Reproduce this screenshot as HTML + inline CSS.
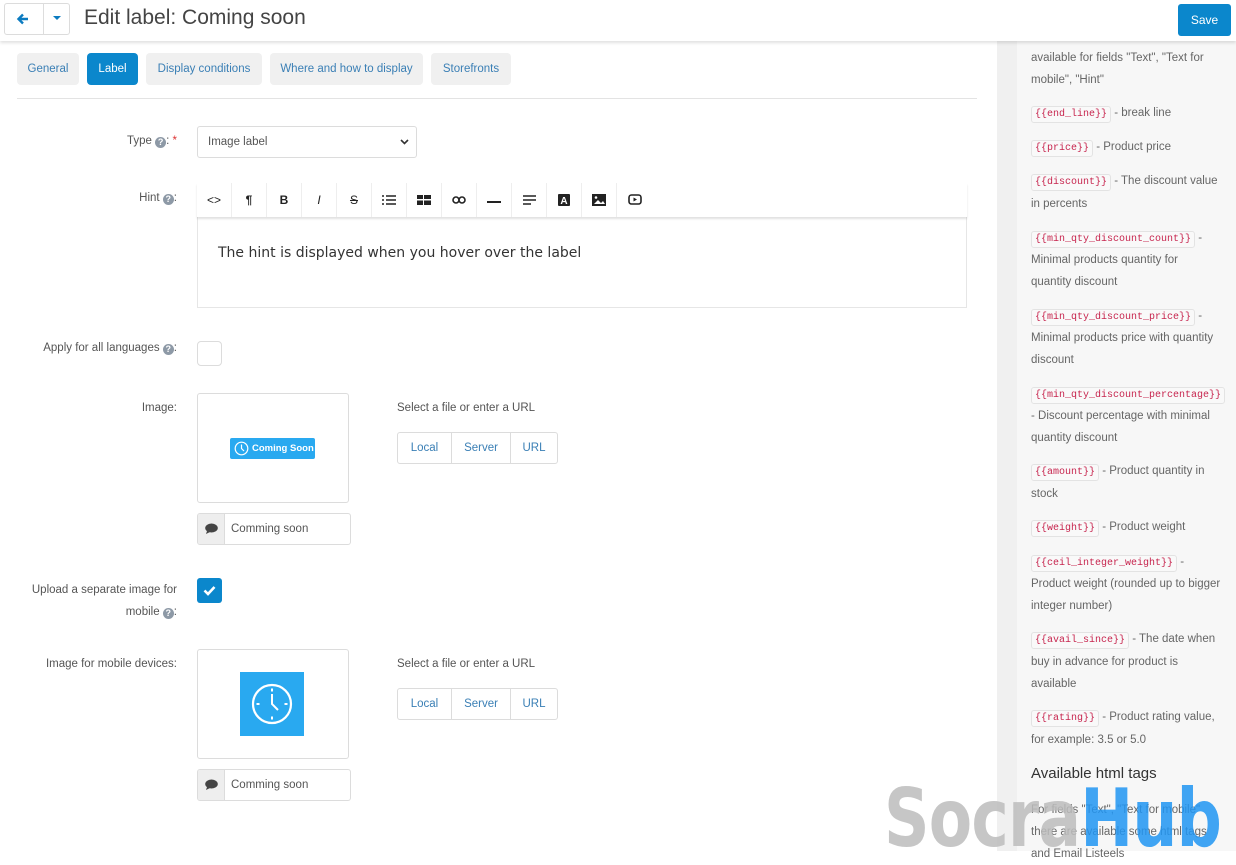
<!DOCTYPE html>
<html><head><meta charset="utf-8"><style>
*{box-sizing:border-box;margin:0;padding:0}
body{width:1236px;height:851px;overflow:hidden;background:#fff;font-family:"Liberation Sans",sans-serif;font-size:11.5px;color:#555;position:relative}
.a{position:absolute}
.hdr{left:0;top:0;width:1236px;height:41px;background:#fff;box-shadow:0 2px 3px rgba(0,0,0,.12);z-index:5}
.tab{position:absolute;top:53px;height:32px;border-radius:4px;background:#f0f0f0;color:#3a7fb5;font-size:11.5px;line-height:32px;text-align:center}
.lbl{position:absolute;right:1059px;text-align:right;font-size:11.5px;color:#555;white-space:nowrap}
.q{display:inline-block;width:11px;height:11px;border-radius:50%;background:#8d99a6;color:#fff;font-size:9px;line-height:11px;text-align:center;font-weight:bold;vertical-align:-1px}
.box{border:1px solid #dcdcdc;border-radius:3px;background:#fff}
.tb{position:absolute;top:183px;width:35px;height:34px;border-right:1px solid #eee;text-align:center;line-height:34px;font-size:12px;color:#222;font-weight:bold}
.btns{position:absolute;height:32px;width:161px;border:1px solid #dcdcdc;border-radius:3px;display:flex;color:#3a7fb5;font-size:11.5px}
.btns div{line-height:30px;text-align:center;border-right:1px solid #dcdcdc}
.btns div:last-child{border-right:0}
.side{left:997px;top:41px;width:20px;height:810px;background:#f0f0f0}
.pan{left:1017px;top:41px;width:219px;height:810px;background:#f7f7f7}
.s{position:absolute;left:1031px;font-size:11.5px;color:#666;white-space:nowrap;line-height:16px}
code{font-family:"Liberation Mono",monospace;font-size:10px;color:#c7254e;background:#f9f9f9;border:1px solid #e3e3e3;border-radius:3px;padding:2px 3px}
</style></head><body>
<div class="a hdr">
 <div class="a box" style="left:4px;top:3px;width:66px;height:32px;border-radius:3px"></div>
 <div class="a" style="left:43px;top:3px;width:1px;height:32px;background:#ddd"></div>
 <svg class="a" style="left:16px;top:12px" width="14" height="14" viewBox="0 0 14 14"><path d="M12 7H3M7 2.5L2.5 7 7 11.5" stroke="#0b7bc0" stroke-width="2.4" fill="none"/></svg>
 <svg class="a" style="left:53px;top:16px" width="8" height="5"><path d="M0 0h8L4 4z" fill="#0b7bc0"/></svg>
 <div class="a" style="left:84px;top:6px;font-size:21px;color:#444">Edit label: Coming soon</div>
 <div class="a" style="left:1178px;top:4px;width:53px;height:32px;background:#0b87cc;border-radius:3px;color:#fff;font-size:12px;line-height:32px;text-align:center">Save</div>
</div>
<div class="tab" style="left:17px;width:62px">General</div>
<div class="tab" style="left:87px;width:51px;background:#0b87cc;color:#fff">Label</div>
<div class="tab" style="left:146px;width:116px">Display conditions</div>
<div class="tab" style="left:270px;width:153px">Where and how to display</div>
<div class="tab" style="left:431px;width:80px">Storefronts</div>
<div class="a" style="left:17px;top:98px;width:960px;height:1px;background:#e3e3e3"></div>

<div class="lbl" style="top:135px">Type <span class="q">?</span>: <span style="color:#d33">*</span></div>
<div class="a box" style="left:197px;top:126px;width:220px;height:32px;padding:9px 10px;color:#555">Image label
 <svg class="a" style="right:7px;top:12px" width="9" height="6"><path d="M1 1l3.5 3.5L8 1" stroke="#333" stroke-width="1.6" fill="none"/></svg></div>

<div class="lbl" style="top:192px">Hint <span class="q">?</span>:</div>
<div class="a" style="left:197px;top:183px;width:770px;height:125px;border:1px solid #e6e6e6"></div>
<div class="a" style="left:197px;top:183px;width:770px;height:34px;background:#fff;box-shadow:0 2px 2px rgba(0,0,0,.12)"></div>
<div class="tb" style="left:197px;font-weight:normal">&lt;&gt;</div>
<div class="tb" style="left:232px">¶</div>
<div class="tb" style="left:267px">B</div>
<div class="tb" style="left:302px;font-style:italic;font-weight:normal">I</div>
<div class="tb" style="left:337px;text-decoration:line-through;font-weight:normal">S</div>
<div class="tb" style="left:372px"><svg width="14" height="10" style="vertical-align:-1px"><path d="M0 1h2M4 1h10M0 5h2M4 5h10M0 9h2M4 9h10" stroke="#222" stroke-width="1.6"/></svg></div>
<div class="tb" style="left:407px"><svg width="14" height="10" style="vertical-align:-1px"><path d="M0 0h6v4H0zM7 0h7v4H7zM0 5.5h6V10H0zM7 5.5h7V10H7z" fill="#222"/></svg></div>
<div class="tb" style="left:442px"><svg width="14" height="8" style="vertical-align:0"><rect x="1" y="1" width="6" height="6" rx="3" stroke="#222" stroke-width="1.6" fill="none"/><rect x="7" y="1" width="6" height="6" rx="3" stroke="#222" stroke-width="1.6" fill="none"/></svg></div>
<div class="tb" style="left:477px"><svg width="14" height="4"><path d="M0 2h14" stroke="#222" stroke-width="2"/></svg></div>
<div class="tb" style="left:512px"><svg width="13" height="10" style="vertical-align:-1px"><path d="M0 1h13M0 5h13M0 9h8" stroke="#222" stroke-width="1.6"/></svg></div>
<div class="tb" style="left:547px"><svg width="12" height="12" style="vertical-align:-2px"><rect width="12" height="12" rx="1" fill="#222"/><text x="6" y="10" font-size="10" font-family="Liberation Sans" font-weight="bold" fill="#fff" text-anchor="middle">A</text></svg></div>
<div class="tb" style="left:582px"><svg width="14" height="12" style="vertical-align:-2px"><rect width="14" height="12" fill="#222"/><path d="M2 10l4-4 3 3 2-2 2 3z" fill="#fff"/><circle cx="4" cy="3.5" r="1.3" fill="#fff"/></svg></div>
<div class="tb" style="left:617px;border-right:0"><svg width="14" height="11" style="vertical-align:-1px"><rect x="1" y="1" width="12" height="9" rx="2.5" stroke="#222" stroke-width="1.6" fill="none"/><path d="M5.5 3.5v4l3.5-2z" fill="#222"/></svg></div>
<div class="a" style="left:218px;top:245px;font-family:'DejaVu Sans',sans-serif;font-size:14px;color:#333">The hint is displayed when you hover over the label</div>

<div class="lbl" style="top:342px">Apply for all languages <span class="q">?</span>:</div>
<div class="a box" style="left:197px;top:341px;width:25px;height:25px;border-radius:4px"></div>

<div class="lbl" style="top:402px">Image:</div>
<div class="a box" style="left:197px;top:393px;width:152px;height:110px"></div>
<div class="a" style="left:230px;top:438px;width:85px;height:21px;background:#29a9f0;border-radius:2px;color:#fff;font-size:9.5px;font-weight:bold;line-height:21px;padding-left:22px">Coming Soon
 <svg class="a" style="left:4px;top:3px" width="15" height="15"><circle cx="7.5" cy="7.5" r="6.3" stroke="#fff" stroke-width="1.2" fill="none"/><path d="M7.5 3.5v4l2.5 2.5" stroke="#fff" stroke-width="1.2" fill="none"/></svg></div>
<div class="a box" style="left:197px;top:513px;width:154px;height:32px;overflow:hidden">
 <div class="a" style="left:0;top:0;width:27px;height:30px;background:#eee;border-right:1px solid #dcdcdc"></div>
 <svg class="a" style="left:7px;top:9px" width="13" height="12"><ellipse cx="6.5" cy="5" rx="6.3" ry="4.5" fill="#444"/><path d="M2 8l-1 3 4-2z" fill="#444"/></svg>
 <div class="a" style="left:33px;top:9px;color:#555">Comming soon</div></div>
<div class="a" style="left:397px;top:402px;color:#555">Select a file or enter a URL</div>
<div class="btns" style="left:397px;top:432px"><div style="width:54px">Local</div><div style="width:59px">Server</div><div style="width:46px">URL</div></div>

<div class="lbl" style="top:579px;line-height:22px">Upload a separate image for<br>mobile <span class="q">?</span>:</div>
<div class="a" style="left:197px;top:578px;width:25px;height:25px;border-radius:3px;background:#0b87cc">
 <svg class="a" style="left:6px;top:7px" width="13" height="11"><path d="M1.5 5.5l3.5 3.5 6.5-7" stroke="#fff" stroke-width="2.6" fill="none"/></svg></div>

<div class="lbl" style="top:658px">Image for mobile devices:</div>
<div class="a box" style="left:197px;top:649px;width:152px;height:110px"></div>
<div class="a" style="left:240px;top:672px;width:64px;height:64px;background:#29a9f0"></div>
<svg class="a" style="left:240px;top:672px" width="64" height="64"><circle cx="32" cy="32" r="19" stroke="#fff" stroke-width="2.2" fill="none"/><path d="M32 16.5v3M32 44.5v3M16.5 32h3M44.5 32h3M32 22v10l6 6" stroke="#fff" stroke-width="2" fill="none"/></svg>
<div class="a box" style="left:197px;top:769px;width:154px;height:32px;overflow:hidden">
 <div class="a" style="left:0;top:0;width:27px;height:30px;background:#eee;border-right:1px solid #dcdcdc"></div>
 <svg class="a" style="left:7px;top:9px" width="13" height="12"><ellipse cx="6.5" cy="5" rx="6.3" ry="4.5" fill="#444"/><path d="M2 8l-1 3 4-2z" fill="#444"/></svg>
 <div class="a" style="left:33px;top:9px;color:#555">Comming soon</div></div>
<div class="a" style="left:397px;top:658px;color:#555">Select a file or enter a URL</div>
<div class="btns" style="left:397px;top:688px"><div style="width:54px">Local</div><div style="width:59px">Server</div><div style="width:46px">URL</div></div>

<div class="a side"></div><div class="a pan"></div>
<div class="s" style="top:50px">available for fields "Text", "Text for</div>
<div class="s" style="top:72px">mobile", "Hint"</div>
<div class="s" style="top:105px"><code>{{end_line}}</code> - break line</div>
<div class="s" style="top:139px"><code>{{price}}</code> - Product price</div>
<div class="s" style="top:173px"><code>{{discount}}</code> - The discount value</div>
<div class="s" style="top:196px">in percents</div>
<div class="s" style="top:230px"><code>{{min_qty_discount_count}}</code> -</div>
<div class="s" style="top:252px">Minimal products quantity for</div>
<div class="s" style="top:274px">quantity discount</div>
<div class="s" style="top:308px"><code>{{min_qty_discount_price}}</code> -</div>
<div class="s" style="top:330px">Minimal products price with quantity</div>
<div class="s" style="top:352px">discount</div>
<div class="s" style="top:386px"><code>{{min_qty_discount_percentage}}</code></div>
<div class="s" style="top:408px">- Discount percentage with minimal</div>
<div class="s" style="top:430px">quantity discount</div>
<div class="s" style="top:463px"><code>{{amount}}</code> - Product quantity in</div>
<div class="s" style="top:486px">stock</div>
<div class="s" style="top:519px"><code>{{weight}}</code> - Product weight</div>
<div class="s" style="top:554px"><code>{{ceil_integer_weight}}</code> -</div>
<div class="s" style="top:576px">Product weight (rounded up to bigger</div>
<div class="s" style="top:598px">integer number)</div>
<div class="s" style="top:631px"><code>{{avail_since}}</code> - The date when</div>
<div class="s" style="top:654px">buy in advance for product is</div>
<div class="s" style="top:676px">available</div>
<div class="s" style="top:709px"><code>{{rating}}</code> - Product rating value,</div>
<div class="s" style="top:732px">for example: 3.5 or 5.0</div>
<div class="s" style="top:764px;font-size:15px;color:#333;line-height:20px">Available html tags</div>
<div class="s" style="top:802px">For fields "Text", "Text for mobile"</div>
<div class="s" style="top:824px">there are available some html tags</div>
<div class="s" style="top:846px">and Email Listeels</div>
<div class="a" style="left:884px;top:774px;font-family:'DejaVu Sans',sans-serif;font-weight:bold;font-size:80px;letter-spacing:-1px;line-height:90px;white-space:nowrap;opacity:.85;transform:scaleX(0.79);transform-origin:0 0"><span style="color:#bdbdbd">Socra</span><span style="color:#2196f3">Hub</span></div>
</body></html>
